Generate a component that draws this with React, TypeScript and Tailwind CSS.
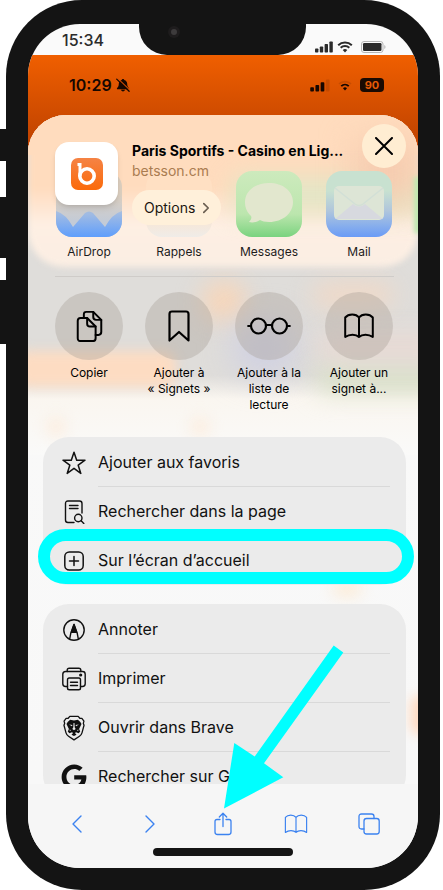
import React from "react";
import { FaGoogle } from "react-icons/fa";

type IconProps = { className?: string };

const stroke = {
  fill: "none",
  stroke: "currentColor",
  strokeLinecap: "round" as const,
  strokeLinejoin: "round" as const,
};

const WifiIcon: React.FC<IconProps & { faded?: boolean }> = ({ className, faded }) => (
  <svg viewBox="0 0 16 12" className={className} aria-hidden="true">
    <path d="M1.2 4.2a9.8 9.8 0 0 1 13.6 0" {...stroke} strokeWidth="2" opacity={faded ? 0.12 : 1} strokeLinecap="butt" />
    <path d="M3.7 6.8a6.2 6.2 0 0 1 8.6 0" {...stroke} strokeWidth="2.1" strokeLinecap="butt" />
    <path d="M8 11.6 5.7 9.1a3.3 3.3 0 0 1 4.6 0Z" fill="currentColor" />
  </svg>
);

const SignalIcon: React.FC<IconProps & { faded?: boolean }> = ({ className, faded }) => (
  <svg viewBox="0 0 18 12" className={className} fill="currentColor" aria-hidden="true">
    <rect x="0" y="7.5" width="3.4" height="4" rx="0.8" />
    <rect x="4.8" y="5.5" width="3.4" height="6" rx="0.8" />
    <rect x="9.6" y="3" width="3.4" height="8.5" rx="0.8" />
    <rect x="14.4" y="0.5" width="3.4" height="11" rx="0.8" opacity={faded ? 0.12 : 1} />
  </svg>
);

const BellOffIcon: React.FC<IconProps> = ({ className }) => (
  <svg viewBox="0 0 16 16" className={className} aria-hidden="true">
    <path
      d="M8 1.2c.8 0 1.3.5 1.4 1.1 2.2.6 3.400 2.200 3.400 4.300 0 3 .9 3.600 2 5 .4.5.1 1.200-.5 1.200H1.700c-.6 0-.9-.7-.5-1.200 1.100-1.400 2-2 2-5 0-2.100 1.200-3.700 3.400-4.300.1-.6.6-1.100 1.400-1.100ZM5.800 13.500h4.400c-.2 1.200-1.100 2-2.200 2s-2-.8-2.200-2Z"
      fill="currentColor"
    />
    <path d="M2.200.6 15.800 13.800" stroke="#dc5102" strokeWidth="1.200" />
    <path d="M.8 1.300 15 15.200" stroke="currentColor" strokeWidth="1.400" strokeLinecap="round" />
  </svg>
);

const CopyIcon: React.FC<IconProps> = ({ className }) => (
  <svg viewBox="0 0 28 34" className={className} {...stroke} strokeWidth="2.1" aria-hidden="true">
    <path d="M8 8V4.500Q8 2 10.500 2H18l8.500 8.500V23.500q0 3-3 3h-3" />
    <path d="M18 2v5.500q0 3 3 3h5.500" />
    <path d="M4.500 8.500H11.500L20.500 17.500V30q0 3-3 3h-13q-3 0-3-3V11.500q0-3 3-3Z" />
    <path d="M11.500 8.500V14.500q0 3 3 3h6" />
  </svg>
);

const BookmarkIcon: React.FC<IconProps> = ({ className }) => (
  <svg viewBox="0 0 22 32" className={className} {...stroke} strokeWidth="2.200" aria-hidden="true">
    <path d="M1.500 4q0-2.500 2.500-2.500h14q2.500 0 2.500 2.500v26.500L11 22l-9.500 8.500Z" />
  </svg>
);

const GlassesIcon: React.FC<IconProps> = ({ className }) => (
  <svg viewBox="0 0 44 18" className={className} {...stroke} strokeWidth="2.200" aria-hidden="true">
    <circle cx="11.500" cy="9" r="7.500" />
    <circle cx="32.500" cy="9" r="7.500" />
    <path d="M1.200 9h2.800M40 9h2.800M18.800 8h6.400" />
  </svg>
);

const BookIcon: React.FC<IconProps & { weight?: number }> = ({ className, weight = 2 }) => (
  <svg viewBox="0 0 30 26" className={className} {...stroke} strokeWidth={weight} aria-hidden="true">
    <path d="M15 4.500v19.500C12 21 5.500 20.800 1.200 24V4.500C4.500.5 12 .5 15 4.500ZM15 24c3-3 9.500-3.200 13.800 0V4.500C25.500.5 18 .5 15 4.500" />
  </svg>
);

const StarIcon: React.FC<IconProps> = ({ className }) => (
  <svg viewBox="0 0 24 24" className={className} {...stroke} strokeWidth="1.500" aria-hidden="true">
    <path d="m12 1.200 2.700 8H23l-6.800 5 2.600 8.200L12 17.300l-6.800 5.100 2.600-8.200L1 9.200h8.300Z" />
  </svg>
);

const PageSearchIcon: React.FC<IconProps> = ({ className }) => (
  <svg viewBox="0 0 24 24" className={className} {...stroke} strokeWidth="1.400" aria-hidden="true">
    <path d="M12 22.500H6q-2.500 0-2.500-2.500V3.500Q3.500 1 6 1h11.500Q20 1 20 3.500V13" />
    <path d="M7.500 5.500h8.500M7.500 8.500h8.500" />
    <circle cx="16.300" cy="18" r="3.700" />
    <path d="m19.200 20.800 2.600 2.600" />
  </svg>
);

const PlusSquareIcon: React.FC<IconProps> = ({ className }) => (
  <svg viewBox="0 0 24 24" className={className} {...stroke} strokeWidth="1.500" aria-hidden="true">
    <rect x="2.800" y="3" width="18.400" height="18" rx="4.500" />
    <path d="M12 7.500v9M7.500 12h9" />
  </svg>
);

const MarkupIcon: React.FC<IconProps> = ({ className }) => (
  <svg viewBox="0 0 24 24" className={className} {...stroke} strokeWidth="1.400" aria-hidden="true">
    <circle cx="12" cy="12" r="10.200" />
    <path d="M7.700 20.800 9 14.200h6l1.300 6.600M9.200 14.200 12 6.500l2.800 7.700" />
    <path d="M9.500 13.800 12 6.500l2.500 7.300Z" fill="currentColor" />
  </svg>
);

const PrinterIcon: React.FC<IconProps> = ({ className }) => (
  <svg viewBox="0 0 24 24" className={className} {...stroke} strokeWidth="1.400" aria-hidden="true">
    <path d="M5.200 4.500V3.200Q5.200 1.200 7.200 1.200h9.600q2 0 2 2v1.300" />
    <path d="M5.500 19.500H3.500Q.8 19.500 .8 16.800V7.200Q.8 4.500 3.500 4.500h17q2.700 0 2.700 2.700v9.600q0 2.700-2.700 2.700h-2" />
    <rect x="5.500" y="11" width="13" height="11.800" rx="1.800" />
    <path d="M8.500 15.200h7M8.500 18.500h7" />
    <circle cx="18.700" cy="8" r=".9" fill="currentColor" />
  </svg>
);

const BraveIcon: React.FC<IconProps> = ({ className }) => (
  <svg viewBox="0 0 24 28" className={className} aria-hidden="true">
    <path
      d="M7.500 1.500h9l1.800 2 2.200.1 2.200 3-.7 2.400.8 2-2.200 8.200q-.7 2.300-2.700 3.600L12 26.800l-5.900-4q-2-1.300-2.700-3.600L1.200 11 2 9l-.7-2.400 2.200-3 2.200-.1Z"
      {...stroke}
      strokeWidth="1.400"
    />
    <path
      d="M7.800 5.200 12 5.800l4.200-.6 2.600 2.300 1.300 2.300-2.600 5.400 1.200 2.600-1.700 1.900-2.800-1-1.200.8 1.700 1.700L12 22.500 9.300 21.200l1.700-1.700-1.200-.8-2.800 1-1.700-1.900 1.200-2.600-2.600-5.400 1.300-2.300Z"
      fill="currentColor"
    />
    <path
      d="m6.800 10.200 3.600.6-.7 1.300ZM17.200 10.200l-3.600.6.7 1.300ZM11.500 8.500h1l.3 5 1 1.700L12 16.300l-1.800-1.100 1-1.700ZM7.500 15.300l1.200 1.700-1.300.2ZM16.500 15.300l-1.200 1.700 1.300.2Z"
      fill="#ebebeb"
    />
  </svg>
);

const ShareIcon: React.FC<IconProps> = ({ className }) => (
  <svg viewBox="0 0 18 24" className={className} {...stroke} strokeWidth="1.300" aria-hidden="true">
    <path d="M6 7.500H3Q1 7.500 1 9.500V20q0 2.500 2.500 2.500h11q2.500 0 2.500-2.500V9.500q0-2-2-2h-3" />
    <path d="M9 14.500V1.500M5.300 5 9 1.200 12.700 5" />
  </svg>
);

const TabsIcon: React.FC<IconProps> = ({ className }) => (
  <svg viewBox="0 0 22 22" className={className} {...stroke} strokeWidth="1.300" aria-hidden="true">
    <rect x="6" y="5.500" width="15.200" height="15.500" rx="2.500" />
    <path d="M6 16H3.500Q1 16 1 13.500V3.500Q1 1 3.500 1h10Q16 1 16 3.500v2" />
  </svg>
);

const ChevronIcon: React.FC<IconProps & { weight?: number }> = ({ className, weight = 1.400 }) => (
  <svg viewBox="0 0 10 18" className={className} {...stroke} strokeWidth={weight} aria-hidden="true">
    <path d="m1 1 8 8-8 8" />
  </svg>
);

const apps = [
  {
    label: "AirDrop",
    tile: "bg-linear-to-b from-[#dccfbf] from-35% to-[#c4cbd6] to-75%",
    glyph: (
      <svg viewBox="0 0 66 66" className="size-full" aria-hidden="true">
        <defs>
          <linearGradient id="airdrop" x1="0" y1="0" x2="0" y2="1">
            <stop offset="0" stopColor="#a9bfe0" />
            <stop offset="1" stopColor="#5f9efc" />
          </linearGradient>
        </defs>
        <path d="M0 40q10 3 17 16l12-14q4-3 8 0l12 14q7-13 17-16v26H0Z" fill="url(#airdrop)" />
      </svg>
    ),
  },
  {
    label: "Rappels",
    tile: "bg-linear-to-b from-[#ffe0c3] from-50% to-[#efece8]",
    glyph: null,
  },
  {
    label: "Messages",
    tile: "bg-linear-to-b from-[#cdeabd] via-[#bce6ae] via-65% to-[#79d37f]",
    glyph: (
      <svg viewBox="0 0 66 66" className="size-full" aria-hidden="true">
        <path d="M33 12c14 0 24 8 24 19S47 51 33 51c-4 0-7-1-9-2-3 2-7 3-11 2 2-2 3-4 2-6-4-4-6-8-6-14 0-11 10-19 24-19Z" fill="#e2e7ce" />
      </svg>
    ),
  },
  {
    label: "Mail",
    tile: "bg-linear-to-b from-[#c8e1d0] from-30% via-[#b0c6dc] via-60% to-[#6a9bf6]",
    glyph: (
      <svg viewBox="0 0 66 66" className="size-full" aria-hidden="true">
        <rect x="8" y="15" width="50" height="34" rx="5" fill="#dde5d6" />
        <path d="M9 17l20 16q4 3 8 0l20-16" fill="none" stroke="#d2dfd6" strokeWidth="1.500" />
        <path d="M9 48 27 33q6 5 12 0l18 15Z" fill="#d7d9df" />
      </svg>
    ),
  },
];

const quickActions = [
  { label: "Copier", icon: <CopyIcon className="h-8 w-[27px]" /> },
  { label: "Ajouter à «\u00a0Signets\u00a0»", icon: <BookmarkIcon className="h-8 w-[22px]" /> },
  { label: "Ajouter à la liste de lecture", icon: <GlassesIcon className="h-[18px] w-11" /> },
  { label: "Ajouter un signet à...", icon: <BookIcon className="h-[26px] w-[30px]" /> },
];

type Row = { label: string; icon: React.ReactNode; highlighted?: boolean };

const pageRows: Row[] = [
  { label: "Ajouter aux favoris", icon: <StarIcon className="size-6" /> },
  { label: "Rechercher dans la page", icon: <PageSearchIcon className="size-6" /> },
  { label: "Sur l’écran d’accueil", icon: <PlusSquareIcon className="size-6" />, highlighted: true },
];

const toolRows: Row[] = [
  { label: "Annoter", icon: <MarkupIcon className="size-6" /> },
  { label: "Imprimer", icon: <PrinterIcon className="size-6" /> },
  { label: "Ouvrir dans Brave", icon: <BraveIcon className="h-[26px] w-6" /> },
  { label: "Rechercher sur Google", icon: <FaGoogle className="size-[26px]" /> },
];

const RowList: React.FC<{ rows: Row[] }> = ({ rows }) => (
  <ul className="ml-[15px] mr-3 rounded-[26px] bg-[#ebebeb] pt-px">
    {rows.map((row, i) => (
      <li key={row.label} className="relative">
        <button type="button" className="flex w-full items-center pl-[18px] pr-4 text-left text-[#111]">
          <span className="flex w-[26px] shrink-0 justify-center">{row.icon}</span>
          <span
            className={`ml-[11px] flex h-[49px] flex-1 items-center border-b text-base ${
              i < rows.length - 1 ? "border-[#d9d9d9]" : "border-transparent"
            }`}
          >
            {row.label}
          </span>
        </button>
        {row.highlighted && (
          <span className="pointer-events-none absolute -left-[5px] -right-2 -top-[7px] bottom-px rounded-full border-[12px] border-[#00ffff]" />
        )}
      </li>
    ))}
  </ul>
);

// Blurred web page behind the share sheet
const SheetBackdrop: React.FC = () => (
  <div className="absolute inset-0 overflow-hidden bg-linear-to-b from-[#fafaf9] to-[#f8f8f8]" aria-hidden="true">
    <div className="absolute inset-x-0 top-0 h-[268px] bg-[#dfddda]" />
    <div className="absolute inset-x-0 top-[260px] h-20 bg-linear-to-b from-[#dfddda] via-[#faf6f0] via-30% to-[#fafaf9]" />
    <div className="absolute -left-3 top-[236px] h-9 w-[160px] rounded-xl bg-[#fddcc2] blur-[6px]" />
    <div className="absolute left-[174px] top-[166px] h-10 w-11 rounded-full bg-[#f8d6b9] blur-md" />
    <div className="absolute left-[205px] top-[205px] h-14 w-16 rounded-full bg-[#cfd0e2] blur-lg" />
    <div className="absolute left-[285px] top-[170px] h-5 w-20 rounded-full bg-[#f4d8c3] blur-md" />
    <div className="absolute left-[290px] top-[250px] h-7 w-32 rounded-lg bg-[#dbe2c9] blur-md" />
    <div className="absolute left-[290px] top-[220px] h-6 w-32 rounded-lg bg-[#eadad4] blur-md" />
    <div className="absolute left-5 top-[304px] size-4 rounded-full bg-[#fde8d5] blur-sm" />
    <div className="absolute left-[164px] top-[304px] size-4 rounded-full bg-[#fde8d5] blur-sm" />
    <div className="absolute left-[305px] top-[468px] h-3 w-7 rounded-full bg-[#fde8cd] blur-sm" />
    <div className="absolute -right-3 top-[580px] h-10 w-5 rounded-full bg-[#ffdcc4] blur-[6px]" />
    <div className="absolute inset-x-0 top-0 h-[152px] rounded-b-[36px] bg-linear-to-b from-[#ffdcbe] from-48% via-[#feefe3] via-72% to-[#fbeee3] blur-[3px]" />
    <div className="absolute inset-x-0 top-0 h-10 bg-[#ffdcbe]" />
    <div className="absolute left-[205px] top-[62px] h-9 w-[190px] bg-[#e3e6c6] blur-md" />
    <div className="absolute right-0 top-6 h-16 w-16 bg-[#f6ccb0] blur-lg" />
    <div className="absolute -right-1 top-[62px] h-14 w-2 bg-[#bfe8b0] blur-[2px]" />
  </div>
);

const SheetHeader: React.FC = () => (
  <header className="absolute inset-x-0 top-0 flex items-start pl-[27px] pr-3">
    <div className="mt-[27px] flex size-[63px] shrink-0 items-center justify-center rounded-[14px] bg-white shadow-md">
      <svg viewBox="0 0 32 32" className="size-8" aria-hidden="true">
        <defs>
          <linearGradient id="brand" x1="0" y1="0" x2="0" y2="1">
            <stop offset="0" stopColor="#f58345" />
            <stop offset="1" stopColor="#fb6a0a" />
          </linearGradient>
        </defs>
        <rect width="32" height="32" rx="7" fill="url(#brand)" />
        <path d="M6.500 6.500H9V18" fill="none" stroke="#fff" strokeWidth="3" />
        <circle cx="16" cy="18" r="7.200" fill="none" stroke="#fff" strokeWidth="3.600" />
      </svg>
    </div>
    <div className="ml-[14px] mt-[26px] min-w-0 flex-1">
      <h1 className="text-sm leading-5 font-bold whitespace-nowrap text-black">
        Paris Sportifs - Casino en Lig...
      </h1>
      <p className="text-sm leading-5 text-[#aa7c51]">betsson.cm</p>
      <button
        type="button"
        className="mt-[9px] flex h-[35px] items-center gap-2 rounded-full bg-[#fff0da] px-3 text-sm text-[#1b1611]"
      >
        Options
        <ChevronIcon className="h-[10px] w-[6px] overflow-visible text-[#6b5f51]" weight={3} />
      </button>
    </div>
    <button
      type="button"
      aria-label="Fermer"
      className="mt-[9px] flex size-[44px] shrink-0 items-center justify-center rounded-full bg-[#ffedd2] text-black"
    >
      <svg viewBox="0 0 18 18" className="size-[18px]" {...stroke} strokeWidth="2" aria-hidden="true">
        <path d="m1 1 16 16M17 1 1 17" />
      </svg>
    </button>
  </header>
);

const Toolbar: React.FC = () => (
  <nav className="shrink-0 bg-[#f6f6f6] px-3 pb-3 text-[#3b82f0]">
    <div className="grid h-16 grid-cols-5 items-center pt-4">
      <button type="button" aria-label="Précédent" className="flex justify-center">
        <ChevronIcon className="h-[18px] w-[10px] rotate-180" />
      </button>
      <button type="button" aria-label="Suivant" className="flex justify-center">
        <ChevronIcon className="h-[18px] w-[10px]" />
      </button>
      <button type="button" aria-label="Partager" className="relative flex justify-center">
        <ShareIcon className="h-6 w-[18px]" />
        <svg
          viewBox="-1 0 120 164"
          className="pointer-events-none absolute bottom-[27px] left-1/2 h-[164px] w-[120px] max-w-none overflow-visible"
          aria-hidden="true"
        >
          <path d="M0 163.500 10.300 98l20.400 13.500L109.700.5l9.600 7L40 118.300l19.300 14Z" fill="#00ffff" />
        </svg>
      </button>
      <button type="button" aria-label="Signets" className="flex justify-center">
        <BookIcon className="h-5 w-6" weight={1.500} />
      </button>
      <button type="button" aria-label="Onglets" className="flex justify-center">
        <TabsIcon className="size-[22px]" />
      </button>
    </div>
    <div className="mx-auto h-2 w-[140px] rounded-full bg-[#141414]" />
  </nav>
);

export default function App() {
  return (
    <main className="relative h-screen overflow-hidden bg-white pl-[6px] pr-[3px] font-[Inter,sans-serif]">
      {/* Side buttons */}
      <div className="absolute left-0 top-[129px] flex w-2 flex-col" aria-hidden="true">
        <span className="h-8 bg-[#141414]" />
        <span className="mt-9 h-[61px] bg-[#141414]" />
        <span className="mt-[22px] h-16 bg-[#141414]" />
      </div>

      <div className="relative h-full rounded-[76px] bg-[#141414] px-[22px] pb-[22px] pt-6">
        <div className="relative flex h-full flex-col overflow-hidden rounded-[52px] bg-[#fafafa]">
          {/* Outer phone status bar */}
          <div className="relative flex h-[31px] shrink-0 justify-between pl-[34px] pr-8 text-[#2b2b2b]">
            <span className="pt-1 text-base leading-6 font-medium">15:34</span>
            <div className="flex items-end gap-1 pb-[2px]">
              <SignalIcon className="h-3 w-[18px]" />
              <WifiIcon className="h-3 w-4" />
              <svg viewBox="0 0 25 12" className="ml-1 h-3 w-[25px]" aria-hidden="true">
                <rect x=".5" y=".5" width="21.500" height="11" rx="2.500" fill="none" stroke="#b5b5b5" />
                <rect x="2" y="2" width="18.500" height="8" rx="1.200" fill="currentColor" />
                <path d="M23.300 4v4q1.200-.7 1.200-2t-1.200-2Z" fill="#b5b5b5" />
              </svg>
            </div>
            <div className="absolute left-[111px] right-[112px] top-0 h-[31px] rounded-b-[28px] bg-[#141414]">
              <span className="absolute left-[29px] top-[2px] flex size-3 items-center justify-center rounded-full bg-[#1e1c1d]">
                <span className="size-[6px] rounded-full bg-[#3d3b3c]" />
              </span>
            </div>
          </div>

          <div className="flex min-h-0 flex-1 flex-col bg-linear-to-b from-[#f05f00] to-[#c44500] to-[80px]">
            {/* Captured screen status bar */}
            <div className="flex h-[60px] shrink-0 items-center justify-between pl-[41px] pr-[34px] text-[#160700]">
              <div className="flex items-center gap-1">
                <span className="text-base leading-6 font-semibold">10:29</span>
                <BellOffIcon className="size-[14px]" />
              </div>
              <div className="flex items-center gap-2">
                <SignalIcon faded className="h-[13px] w-5" />
                <WifiIcon faded className="h-[11px] w-[14px]" />
                <span className="flex h-[14px] w-6 items-center justify-center rounded-[4px] bg-[#1a0a02] text-[11px] leading-3 font-bold text-[#e55a06]">
                  90
                </span>
              </div>
            </div>

            {/* Share sheet */}
            <section className="relative min-h-0 flex-1 overflow-hidden rounded-t-[38px]">
              <SheetBackdrop />
              <div className="relative pt-[56px]">
                <div className="grid grid-cols-4 pl-4 pr-[14px]">
                  {apps.map((app) => (
                    <button key={app.label} type="button" className="flex flex-col items-center text-[#1c1c1c]">
                      <span className={`size-[66px] overflow-hidden rounded-[16px] ${app.tile}`}>{app.glyph}</span>
                      <span className="mt-[7px] text-xs leading-4">{app.label}</span>
                    </button>
                  ))}
                </div>
                <hr className="ml-[27px] mr-6 mt-4 border-[#cfccc9]" />
                <div className="mt-[15px] grid grid-cols-4 items-start pl-4 pr-[14px]">
                  {quickActions.map((action) => (
                    <button key={action.label} type="button" className="flex flex-col items-center text-black">
                      <span className="flex size-[68px] items-center justify-center rounded-full bg-[#a39b93]/35">
                        {action.icon}
                      </span>
                      <span className="mt-[5px] w-[72px] text-xs leading-4 text-center">{action.label}</span>
                    </button>
                  ))}
                </div>
                <div className="mt-6 flex flex-col gap-[19px]">
                  <RowList rows={pageRows} />
                  <RowList rows={toolRows} />
                </div>
              </div>
              <SheetHeader />
            </section>
          </div>

          <Toolbar />
        </div>
      </div>
    </main>
  );
}
